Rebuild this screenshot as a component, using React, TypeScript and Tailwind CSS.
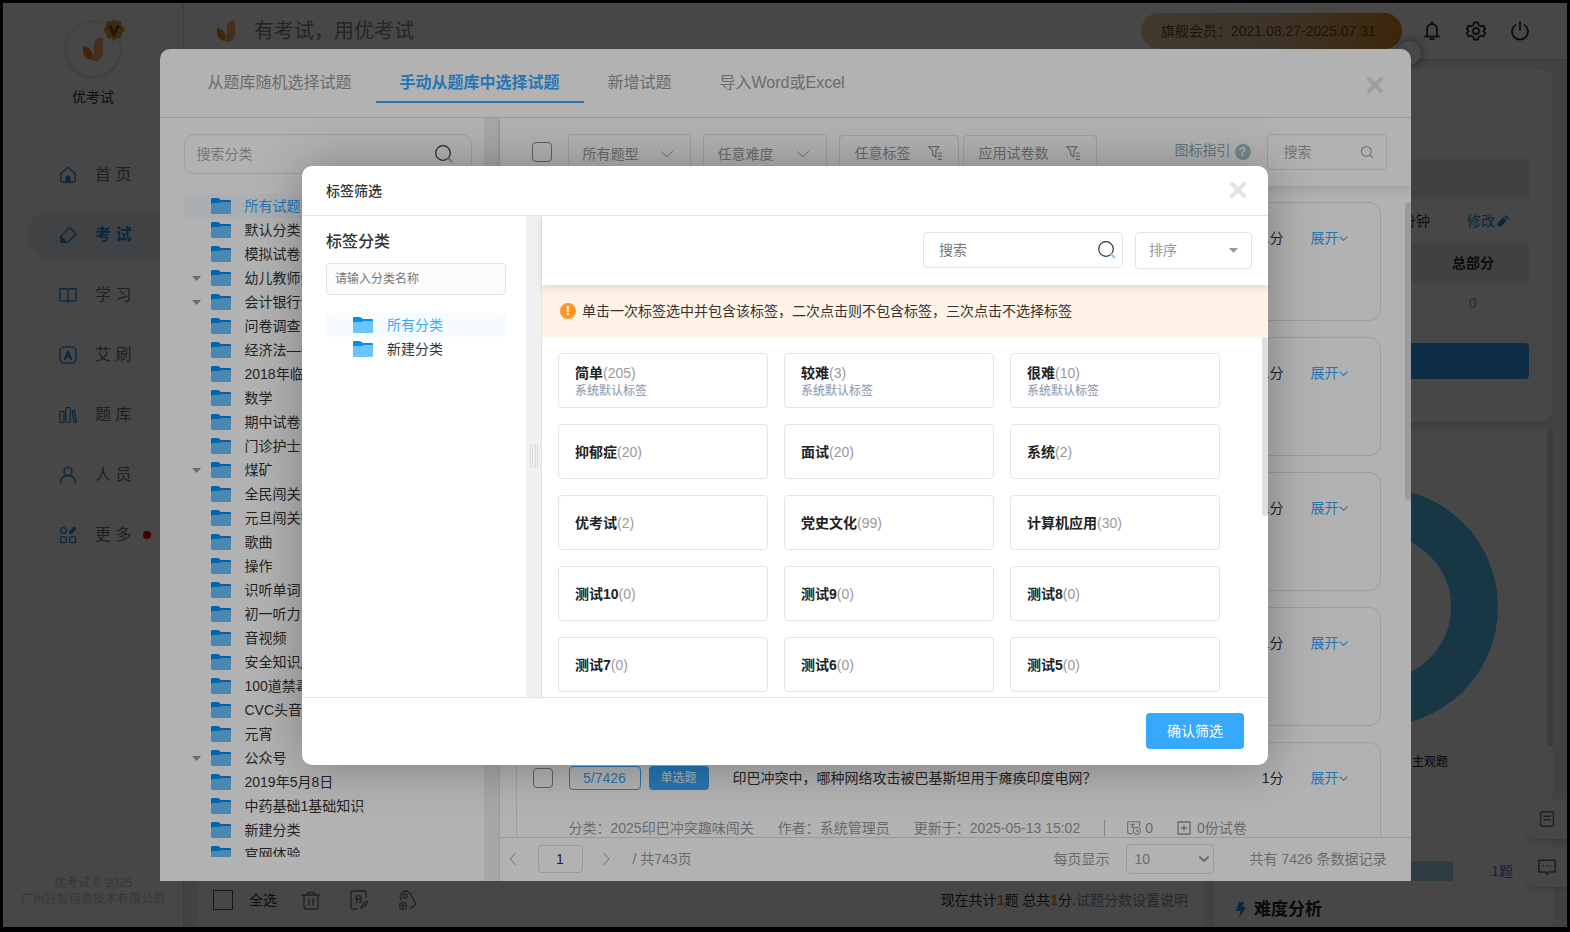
import type { ReactNode } from 'react';

const navItems = ['首 页', '考 试', '学 习', '艾 刷', '题 库', '人 员', '更 多'];

const categories = [
  { name: '所有试题', active: true },
  { name: '默认分类' },
  { name: '模拟试卷' },
  { name: '幼儿教师资格', open: true },
  { name: '会计银行试题', open: true },
  { name: '问卷调查' },
  { name: '经济法—考试' },
  { name: '2018年临床' },
  { name: '数学' },
  { name: '期中试卷' },
  { name: '门诊护士' },
  { name: '煤矿', open: true },
  { name: '全民闯关' },
  { name: '元旦闯关答题' },
  { name: '歌曲' },
  { name: '操作' },
  { name: '识听单词' },
  { name: '初一听力' },
  { name: '音视频' },
  { name: '安全知识库' },
  { name: '100道禁毒题' },
  { name: 'CVC头音' },
  { name: '元宵' },
  { name: '公众号', open: true },
  { name: '2019年5月8日' },
  { name: '中药基础1基础知识' },
  { name: '新建分类' },
  { name: '官网体验' },
];

const tags = [
  { name: '简单', count: 205, system: true },
  { name: '较难', count: 3, system: true },
  { name: '很难', count: 10, system: true },
  { name: '抑郁症', count: 20 },
  { name: '面试', count: 20 },
  { name: '系统', count: 2 },
  { name: '优考试', count: 2 },
  { name: '党史文化', count: 99 },
  { name: '计算机应用', count: 30 },
  { name: '测试10', count: 0 },
  { name: '测试9', count: 0 },
  { name: '测试8', count: 0 },
  { name: '测试7', count: 0 },
  { name: '测试6', count: 0 },
  { name: '测试5', count: 0 },
];

/* Icons */

function Stroke({ size, width = 1.5, className = '', children }: { size: number; width?: number; className?: string; children: ReactNode }) {
  return (
    <svg width={size} height={size} viewBox="0 0 20 20" fill="none" stroke="currentColor" strokeWidth={width} strokeLinecap="round" strokeLinejoin="round" className={`shrink-0 ${className}`} aria-hidden="true">
      {children}
    </svg>
  );
}

const navIcons = [
  <><path d="M2 8.500 8.800 2.400a1.800 1.800 0 0 1 2.400 0L18 8.500V16a2 2 0 0 1-2 2H4a2 2 0 0 1-2-2z" /><path d="M7.800 17.500v-4a2.200 2.200 0 0 1 4.400 0v4z" fill="currentColor" /></>,
  <><path d="M10.500 2.800a2 2 0 0 1 2.800 0l4.500 4.500a2 2 0 0 1 0 2.800L10 18H4a2 2 0 0 1-2-2v-4.500z" /><path d="M2 11.500 8.500 18H4a2 2 0 0 1-2-2z" fill="currentColor" /></>,
  <path d="M10 4v14M10 4 8.500 3H1v13.500h7.500L10 18l1.500-1.500H19V3h-7.500z" />,
  <><rect x="1" y="1" width="18" height="18" rx="5" /><path d="M6.500 14.500 10 6l3.500 8.500M8 11.800h4" strokeWidth="2.200" /></>,
  <><rect x="1" y="6" width="4.500" height="12.500" rx="1" /><rect x="7.500" y="1.500" width="5" height="17" rx="2" /><path d="m14.500 5.500 2.500-.700 2.500 13-2.500.7z" /></>,
  <><circle cx="10" cy="6" r="4.500" /><path d="M1.500 19c0-5 3.800-8.500 8.500-8.500s8.500 3.500 8.500 8.500" /></>,
  <><circle cx="5" cy="5" r="3.200" /><rect x="1.800" y="12" width="6.400" height="6.400" rx="1" /><rect x="12" y="12" width="6.400" height="6.400" rx="1" /><path d="m13 7 4-4" strokeWidth="4" /></>,
];

function Logo({ className }: { className: string }) {
  return (
    <svg viewBox="0 0 20 24" className={className} aria-hidden="true">
      <path d="M0 9c4 0 8 3 9 7 1 3 0 5-1 7-5-1-8-5-8-9z" fill="#ec8418" />
      <path d="M20 0c-7 1-9 4-9 9 0 6 0 10-4 13 1 2 4 2 6 2 5-1 7-5 7-10z" fill="#f5a568" />
    </svg>
  );
}

function FolderIcon() {
  return (
    <svg width="20" height="16" viewBox="0 0 20 16" className="shrink-0" aria-hidden="true">
      <path d="M0 1a1 1 0 0 1 1-1h6l3 2h9a1 1 0 0 1 1 1v4H0z" fill="#0090f4" />
      <path d="M0 6a1 1 0 0 1 1-1h8l1-1h9a1 1 0 0 1 1 1v10a1 1 0 0 1-1 1H1a1 1 0 0 1-1-1z" fill="#6bc3ff" />
    </svg>
  );
}

function SearchIcon() {
  return (
    <svg width="20" height="20" viewBox="0 0 20 20" fill="none" strokeWidth="1.200" strokeLinecap="round" className="shrink-0" aria-hidden="true">
      <circle cx="10" cy="9" r="7.300" stroke="#333" />
      <path d="m15.500 14.500 3 3" stroke="#7fcbff" strokeWidth="2" />
    </svg>
  );
}

function CloseIcon() {
  return (
    <Stroke size={20} width={4}><path d="m4 4 12 12M16 4 4 16" /></Stroke>
  );
}

function ChevronDown({ size, width = 1.5 }: { size: number; width?: number }) {
  return <Stroke size={size} width={width}><path d="m2 6.500 8 7.500 8-7.500" /></Stroke>;
}

function Caret() {
  return (
    <svg width="9" height="5" viewBox="0 0 9 5" className="shrink-0" aria-hidden="true">
      <path d="M0 0h9L4.500 5z" fill="#999" />
    </svg>
  );
}

function FilterIcon() {
  return (
    <Stroke size={16}><path d="M2 2h13l-4 5v8l-4-3V7zM14 10h4M14 14h4M14 18h4" /></Stroke>
  );
}

function FolderRow({ name, active, open }: { name: string; active?: boolean; open?: boolean }) {
  return (
    <li>
      <button type="button" className={`flex h-6 w-full items-center whitespace-nowrap rounded text-left text-sm ${active ? 'bg-[#f5fbff] text-[#36a9ff]' : 'text-[#333]'}`}>
        <span className="flex w-[27px] shrink-0 pl-2">{open && <Caret />}</span>
        <FolderIcon />
        <span className="ml-3.5">{name}</span>
      </button>
    </li>
  );
}

/* Page behind the dialogs */

function Sidebar() {
  return (
    <aside className="flex w-[181px] shrink-0 flex-col border-r border-[#ddd] bg-white">
      <div className="flex flex-col items-center pt-[18px]">
        <div className="relative flex size-14 items-center justify-center rounded-full border border-[#f1dfcc] bg-white shadow">
          <Logo className="h-6 w-5" />
          <svg width="24" height="24" viewBox="0 0 24 24" className="absolute -right-1.5 -top-1" aria-hidden="true">
            <path d="m12 1 3 2.500 4-.5.500 4L23 12l-3.500 4-.500 4.500-4-.5-3 3-3-3-4 .5-.5-4.500L1 12l3.500-5 .5-4 4 .5z" fill="#d69b3c" />
            <path d="m7.500 7.500 4.500 9 4.500-9" fill="none" stroke="#7c4a0c" strokeWidth="3" />
          </svg>
        </div>
        <p className="mt-2.5 text-sm text-[#333]">优考试</p>
      </div>
      <nav className="mt-11 flex flex-col gap-3 pl-6">
        {navItems.map((item, i) => (
          <a
            key={item}
            href="#"
            className={`flex h-12 items-center rounded-l-full pl-8 ${i === 1 ? 'bg-[#eceef0] font-bold text-[#2a8fdc]' : 'text-[#777]'}`}
          >
            <Stroke size={18} className="text-[#2a8fdc]">{navIcons[i]}</Stroke>
            <span className="ml-[18px]">{item}</span>
            {item === '更 多' && <span className="ml-3 size-2 rounded-full bg-[#e60012]"></span>}
          </a>
        ))}
      </nav>
      <p className="mt-auto pb-5 text-center text-xs text-[#c8c8c8]">
        优考试 © 2025
        <br />
        广州好智信息技术有限公司
      </p>
    </aside>
  );
}

function TopBar() {
  return (
    <header className="relative flex h-14 shrink-0 items-center bg-white pl-[33px] pr-[37px] shadow">
      <Logo className="h-[22px] w-[18px]" />
      <span className="ml-[19px] text-xl text-[#888]">有考试，用优考试</span>
      <div className="ml-auto flex h-9 w-[261px] items-center whitespace-pre rounded-full bg-linear-to-r from-[#e8cfa0] via-[#dcb995] to-[#d98a1c] pl-5 text-sm text-[#76450c]">
        旗舰会员：2021.08.27-2025.07.31
      </div>
      <div className="ml-5 flex items-center gap-6 text-[#333]">
        <button type="button" aria-label="消息">
          <Stroke size={20} width={1.8}><path d="M5 15V8a5 5 0 0 1 10 0v7M3 15.500h14M8.500 18h3M10 1v2" /></Stroke>
        </button>
        <button type="button" aria-label="设置">
          <Stroke size={20} width={1.8}>
            <path d="M8 1.500h4l.700 2.700 2 1.100 2.700-.800 1.800 3.300L17.300 10l1.900 2.200-1.800 3.300-2.700-.800-2 1.100-.700 2.700H8l-.700-2.700-2-1.100-2.700.800-1.800-3.300L2.700 10 .8 7.800l1.800-3.300 2.700.8 2-1.100z" />
            <circle cx="10" cy="10" r="3" />
          </Stroke>
        </button>
        <button type="button" aria-label="退出">
          <Stroke size={20} width={1.800}><path d="M10 1v8M5.500 4a8 8 0 1 0 9 0" /></Stroke>
        </button>
      </div>
      <span className="absolute -bottom-1.5 right-[146px] size-6 rounded-full bg-white shadow-[0_0_8px_rgba(0,0,0,0.5)]"></span>
    </header>
  );
}

function EditorFooter() {
  return (
    <div className="flex items-center px-4 pb-[17px] text-sm text-[#333]">
      <label className="flex items-center gap-4">
        <input type="checkbox" className="size-5 appearance-none border border-[#555]" />
        全选
      </label>
      <div className="ml-6 flex gap-7 text-[#777]">
        <button type="button" aria-label="删除">
          <Stroke size={20} width={1.3}><path d="M1 5h18M6.500 5V2.500h7V5M3 5v12a2 2 0 0 0 2 2h10a2 2 0 0 0 2-2V5M8 9v6M12 9v6" /></Stroke>
        </button>
        <button type="button" aria-label="批量设置分数">
          <Stroke size={20} width={1.3}><path d="M8 19H4a2 2 0 0 1-2-2V3a2 2 0 0 1 2-2h11a2 2 0 0 1 2 2v5M12 18.500l.500-2.500 5-5 1.500 1.500-5 5zM6.500 8l2-2.500M12.500 8l-2-2.500M7 9h5M9 9l-2 4M12 9v3.500h-1.500" /></Stroke>
        </button>
        <button type="button" aria-label="批量设置标签">
          <Stroke size={20} width={1.3}><path d="M4 10 3 6l2-4 5-1 3 2 6 11-6 4.500M4.500 16h3M6 14.500v3" /><circle cx="8" cy="6" r="2" /><circle cx="6" cy="16" r="3.300" /></Stroke>
        </button>
      </div>
      <p className="ml-auto">
        现在共计<b className="text-[#ff8a1e]">1</b>题 总共<b className="text-[#ff8a1e]">1</b>分.
        <a href="#" className="text-[#8894a0]">试题分数设置说明</a>
      </p>
    </div>
  );
}

function StatsColumn() {
  return (
    <div className="flex w-[339px] shrink-0 flex-col gap-2">
      <section className="h-[353px] shrink-0 rounded-xl bg-white px-6 pt-[90px] shadow-sm">
        <div className="h-10 bg-[#ebebeb]"></div>
        <div className="flex h-11 items-center justify-end text-sm text-[#333]">
          分钟
          <button type="button" className="ml-[37px] mr-5 flex items-center gap-0.5 text-[#2a8fdc]">
            修改
            <svg width="12" height="12" viewBox="0 0 14 14" aria-hidden="true">
              <path d="m1 9 6.500-6.500 4 4L5 13l-4.500.5zM8.500 1.500 10 0l4 4-1.500 1.500z" fill="currentColor" />
            </svg>
          </button>
        </div>
        <table className="w-full text-center text-sm">
          <thead>
            <tr className="h-10 bg-[#ebebeb] text-[#333]">
              <td></td>
              <th className="w-28">总部分</th>
            </tr>
          </thead>
          <tbody>
            <tr className="h-10 text-[#ff8a1e]">
              <td></td>
              <td>0</td>
            </tr>
          </tbody>
        </table>
        <button type="button" aria-label="保存试卷" className="mt-5 h-9 w-full rounded bg-[#36a9ff]"></button>
      </section>
      <section className="flex flex-1 justify-between rounded-t-xl bg-white">
        <div className="flex-1 pl-[22px] pt-[58px]">
          <svg width="238" height="238" viewBox="0 0 238 238" className="ml-6" role="img" aria-label="题型分布">
            <circle cx="119" cy="119" r="95.500" fill="none" stroke="#54c8f5" strokeWidth="47" />
          </svg>
          <p className="mt-7 pr-[99px] text-right text-xs text-[#222]">主观题</p>
          <div className="mt-[91px] flex h-5 items-center pr-[34px] text-sm text-[#2a8fdc]">
            <div className="h-5 w-[217px] bg-[#a9dbf0]"></div>
            <span className="ml-auto">1题</span>
          </div>
          <h2 className="mt-4 flex items-center gap-2 text-[17px] font-bold text-[#222]">
            <svg width="10" height="16" viewBox="0 0 10 16" aria-hidden="true">
              <path d="M3 0h5L6.500 5H10L3 16l1.500-7H0z" fill="#2a8fdc" />
            </svg>
            难度分析
          </h2>
        </div>
        <span className="h-[316px] w-1.5 shrink-0 rounded-full bg-[#dadada]"></span>
      </section>
    </div>
  );
}

/* Question bank dialog */

function QuestionMeta() {
  return (
    <div className="ml-9 mt-[28px] flex items-center whitespace-nowrap text-sm text-[#999]">
      <span>分类：2025印巴冲突趣味闯关</span>
      <span className="ml-6">作者：系统管理员</span>
      <span className="ml-6">更新于：2025-05-13 15:02</span>
      <span className="ml-6 h-4 w-px bg-[#bbb]"></span>
      <Stroke size={14} className="ml-[22px]"><path d="M7 18H3a2 2 0 0 1-2-2V1h17v6M5.500 5h5M8 3.500V8M6 9l2-2 2 2M14 12v2.500h2" /><circle cx="14" cy="14" r="5" /></Stroke>
      <span className="ml-1">0</span>
      <Stroke size={14} width={2} className="ml-6"><path d="M1.500 1.500h17v17h-17zM6 10h8M10 6v8" /></Stroke>
      <span className="ml-1.5">0份试卷</span>
    </div>
  );
}

function QuestionCard({ full }: { full?: boolean }) {
  return (
    <article className="h-[119px] shrink-0 rounded-xl border border-[#e2e2e2] px-4 pt-[23px]">
      <div className="flex h-6 items-center text-sm text-[#333]">
        {full && (
          <>
            <input type="checkbox" aria-label="选择试题" className="size-5 appearance-none rounded-sm border border-[#888]" />
            <span className="ml-4 flex h-6 w-[72px] items-center justify-center rounded border border-[#36a9ff] text-[#36a9ff]">5/7426</span>
            <span className="ml-2 flex h-6 w-[60px] items-center justify-center rounded bg-[#36a9ff] text-xs text-white">单选题</span>
            <p className="ml-6">印巴冲突中，哪种网络攻击被巴基斯坦用于瘫痪印度电网？</p>
          </>
        )}
        <span className="ml-auto">1分</span>
        <button type="button" className="ml-[27px] mr-4 flex items-center text-[#36a9ff]">
          展开
          <ChevronDown size={9} width={2.500} />
        </button>
      </div>
      {full && <QuestionMeta />}
    </article>
  );
}

function FilterSelect({ label, className }: { label: string; className: string }) {
  return (
    <label className={`flex h-10 items-center rounded border border-[#e2e2e2] pl-3.5 pr-4 ${className}`}>
      <select aria-label={label} className="flex-1 appearance-none bg-transparent outline-none">
        <option>{label}</option>
      </select>
      <ChevronDown size={14} width={1.300} />
    </label>
  );
}

function QuestionBankDialog() {
  return (
    <div role="dialog" aria-label="选择试题" className="flex h-[90%] w-[1251px] max-w-full flex-col overflow-hidden rounded-t-[10px] bg-white">
      <header className="flex h-[69px] shrink-0 items-center border-b border-[#ddd] pl-6 pr-[26px] text-[#999]">
        <button type="button" className="h-10 px-6">从题库随机选择试题</button>
        <button type="button" className="h-10 border-y-2 border-[#36a9ff] border-t-transparent px-6 font-bold text-[#36a9ff]">手动从题库中选择试题</button>
        <button type="button" className="h-10 px-6">新增试题</button>
        <button type="button" className="h-10 px-6">导入Word或Excel</button>
        <button type="button" aria-label="关闭" className="ml-auto pt-1 text-[#e2e2e2]"><CloseIcon /></button>
      </header>

      <div className="flex min-h-0 flex-1">
        <div className="flex w-[324px] shrink-0 flex-col pb-6 pl-6 pr-3 pt-4">
          <div className="flex h-10 shrink-0 items-center rounded-[10px] border border-[#e2e2e2] pl-3 pr-[18px] text-sm">
            <input type="text" aria-label="搜索分类" placeholder="搜索分类" className="min-w-0 flex-1 outline-none placeholder:text-[#aaa]" />
            <SearchIcon />
          </div>
          <ul className="mt-5 min-h-0 flex-1 overflow-hidden">
            {categories.map((item) => (
              <FolderRow key={item.name} {...item} />
            ))}
          </ul>
        </div>
        <div className="w-4 shrink-0 border-r border-[#ddd] bg-[#f0f0f0]"></div>

        <div className="flex min-w-0 flex-1 flex-col">
          <div className="z-10 flex h-[68px] shrink-0 items-start pl-8 pr-6 pt-4 text-sm text-[#999] shadow-[0_4px_8px_rgba(0,0,0,0.1)]">
            <input type="checkbox" aria-label="全选" className="mt-2 size-5 shrink-0 appearance-none rounded-sm border border-[#888]" />
            <FilterSelect label="所有题型" className="ml-4 w-[123px]" />
            <FilterSelect label="任意难度" className="ml-3 w-[124px]" />
            <button type="button" className="ml-3 mt-px flex h-9 w-[120px] items-center justify-between rounded border border-[#e2e2e2] px-[15px]">
              任意标签 <FilterIcon />
            </button>
            <button type="button" className="ml-1 mt-px flex h-9 w-[134px] items-center justify-between rounded border border-[#e2e2e2] px-[15px]">
              应用试卷数 <FilterIcon />
            </button>
            <a href="#" className="ml-auto mt-1.5 flex items-center gap-1 text-[#8fa9b8]">
              图标指引
              <span className="mt-1 flex size-4 items-center justify-center rounded-full bg-[#a9bfcc] text-xs font-bold text-white">?</span>
            </a>
            <div className="ml-4 flex h-9 w-[120px] items-center rounded border border-[#e2e2e2] pl-4 pr-3">
              <input type="text" aria-label="搜索试题" placeholder="搜索" className="min-w-0 flex-1 outline-none placeholder:text-[#aaa]" />
              <Stroke size={14}><circle cx="9" cy="9" r="7" /><path d="m14.500 14.500 3.500 3.500" /></Stroke>
            </div>
          </div>

          <div className="flex min-h-0 flex-1 overflow-hidden pl-4 pt-4">
            <div className="flex min-w-0 flex-1 flex-col gap-4">
              <QuestionCard />
              <QuestionCard />
              <QuestionCard />
              <QuestionCard />
              <QuestionCard full />
            </div>
            <span className="ml-6 h-[298px] w-1.5 rounded-full bg-[#dddfe2]"></span>
          </div>

          <footer className="flex h-11 shrink-0 items-center border-t border-[#ddd] pl-1.5 pr-6 text-sm text-[#999]">
            <button type="button" aria-label="上一页"><Stroke size={14} width={1.300}><path d="m13 2-7 8 7 8" /></Stroke></button>
            <input type="text" aria-label="页码" defaultValue="1" className="ml-[18px] h-7 w-[45px] rounded border border-[#ddd] text-center text-[#333]" />
            <button type="button" aria-label="下一页" className="ml-4"><Stroke size={14} width={1.300}><path d="m7 2 7 8-7 8" /></Stroke></button>
            <span className="ml-5">/ 共743页</span>
            <label htmlFor="page-size" className="ml-auto">每页显示</label>
            <div className="ml-4 flex h-[30px] w-[88px] items-center rounded border border-[#ddd] pl-2 pr-1">
              <select id="page-size" className="flex-1 appearance-none bg-transparent outline-none">
                <option>10</option>
              </select>
              <ChevronDown size={10} width={4} />
            </div>
            <span className="ml-9">共有 7426 条数据记录</span>
          </footer>
        </div>
      </div>
    </div>
  );
}

/* Tag filter dialog */

function TagFilterDialog() {
  return (
    <div role="dialog" aria-label="标签筛选" className="flex w-[966px] max-w-full flex-col overflow-hidden rounded-[10px] bg-white shadow-[1px_1px_50px_rgba(0,0,0,0.3)]">
      <header className="flex h-[50px] items-center justify-between border-b border-[#e4e4e4] px-6">
        <h2 className="pt-0.5 text-sm font-medium text-[#333]">标签筛选</h2>
        <button type="button" aria-label="关闭" className="-mr-1 text-[#e2e2e2]"><CloseIcon /></button>
      </header>

      <div className="flex h-[481px]">
        <div className="w-56 shrink-0 pl-6 pr-5 pt-3.5">
          <h3 className="font-medium text-[#333]">标签分类</h3>
          <input type="text" aria-label="分类名称" placeholder="请输入分类名称" className="mt-[9px] h-8 w-full rounded border border-[#e2e2e2] bg-[#fcfcfc] px-2 text-xs outline-none placeholder:text-[#777]" />
          <ul className="mt-[18px]">
            <FolderRow name="所有分类" active />
            <FolderRow name="新建分类" />
          </ul>
        </div>
        <div className="flex w-4 shrink-0 items-center justify-center border-r border-[#e2e2e2] bg-[#f0f0f0]">
          <span className="h-6 w-2 border-x border-[#ddd] px-px"><span className="block h-full border-x border-[#ddd]"></span></span>
        </div>

        <div className="flex min-w-0 flex-1 flex-col">
          <div className="z-10 flex h-[69px] shrink-0 items-start justify-end gap-3 pr-4 pt-4 text-sm shadow-[0_4px_8px_rgba(0,0,0,0.1)]">
            <div className="flex h-9 w-[200px] items-center rounded border border-[#e2e2e2] pl-[15px] pr-1.5">
              <input type="text" aria-label="搜索标签" placeholder="搜索" className="min-w-0 flex-1 outline-none placeholder:text-[#777]" />
              <SearchIcon />
            </div>
            <div className="flex h-[37px] w-[117px] items-center rounded border border-[#e2e2e2] px-[13px] text-[#999]">
              <select aria-label="排序" className="flex-1 appearance-none bg-transparent outline-none">
                <option>排序</option>
              </select>
              <Caret />
            </div>
          </div>

          <p className="flex h-[52px] shrink-0 items-center bg-[#fff2e6] pl-[18px] text-sm text-[#333]">
            <span className="mr-1.5 flex size-4 items-center justify-center rounded-full bg-[#ff9529] text-xs font-bold text-white">!</span>
            单击一次标签选中并包含该标签，二次点击则不包含标签，三次点击不选择标签
          </p>

          <div className="flex min-h-0 flex-1">
            <div className="grid flex-1 auto-rows-[55px] grid-cols-3 gap-4 pl-4 pt-4">
              {tags.map((tag) => (
                <button key={tag.name} type="button" className="flex flex-col justify-center rounded border border-[#e4e4e4] px-4 pt-px text-left">
                  <span className="text-sm text-[#999]">
                    <b className="text-[#222]">{tag.name}</b>({tag.count})
                  </span>
                  {tag.system && <span className="text-xs font-medium text-[#9aa4b4]">系统默认标签</span>}
                </button>
              ))}
            </div>
            <span className="ml-[42px] h-[179px] w-1.5 rounded-full bg-[#dddfe2]"></span>
          </div>
        </div>
      </div>

      <footer className="flex h-[68px] items-center justify-end border-t border-[#e4e4e4] px-6">
        <button type="button" className="h-9 w-[98px] rounded bg-[#36a9ff] text-sm text-white">确认筛选</button>
      </footer>
    </div>
  );
}

export default function App() {
  return (
    <div className="relative flex h-screen overflow-hidden border-[3px] border-b-[5px] border-black bg-[#eceef2] font-['Liberation_Sans','Noto_Sans_CJK_SC',sans-serif]">
      <Sidebar />
      <main className="flex min-w-0 flex-1 flex-col">
        <TopBar />
        <div className="flex min-h-0 flex-1 gap-2.5 pl-[13px] pr-3.5 pt-2.5">
          <section className="flex flex-1 flex-col justify-end rounded-t-xl bg-white">
            <EditorFooter />
          </section>
          <StatsColumn />
        </div>
      </main>

      <div className="absolute right-0 top-[796px] flex flex-col gap-2 text-[#777]">
        <button type="button" aria-label="帮助文档" className="flex size-10 items-center justify-center rounded-l-lg bg-white shadow-md">
          <Stroke size={16} width={1.800}><path d="M4 1h12a2 2 0 0 1 2 2v14a2 2 0 0 1-2 2H4a2 2 0 0 1-2-2V3a2 2 0 0 1 2-2zM6 6.500h8M6 11h8" /></Stroke>
        </button>
        <button type="button" aria-label="在线客服" className="flex size-10 items-center justify-center rounded-l-lg bg-white shadow-md">
          <Stroke size={18} width={1.800}><path d="M1 2.500h18v13h-7L10 18l-2-2.500H1zM6 9h.1M10 9h.1M14 9h.1" /></Stroke>
        </button>
      </div>

      <div className="absolute inset-0 z-20 flex items-center justify-center bg-black/60">
        <QuestionBankDialog />
      </div>
      <div className="absolute inset-0 z-30 flex items-center justify-center bg-black/30">
        <TagFilterDialog />
      </div>
    </div>
  );
}
